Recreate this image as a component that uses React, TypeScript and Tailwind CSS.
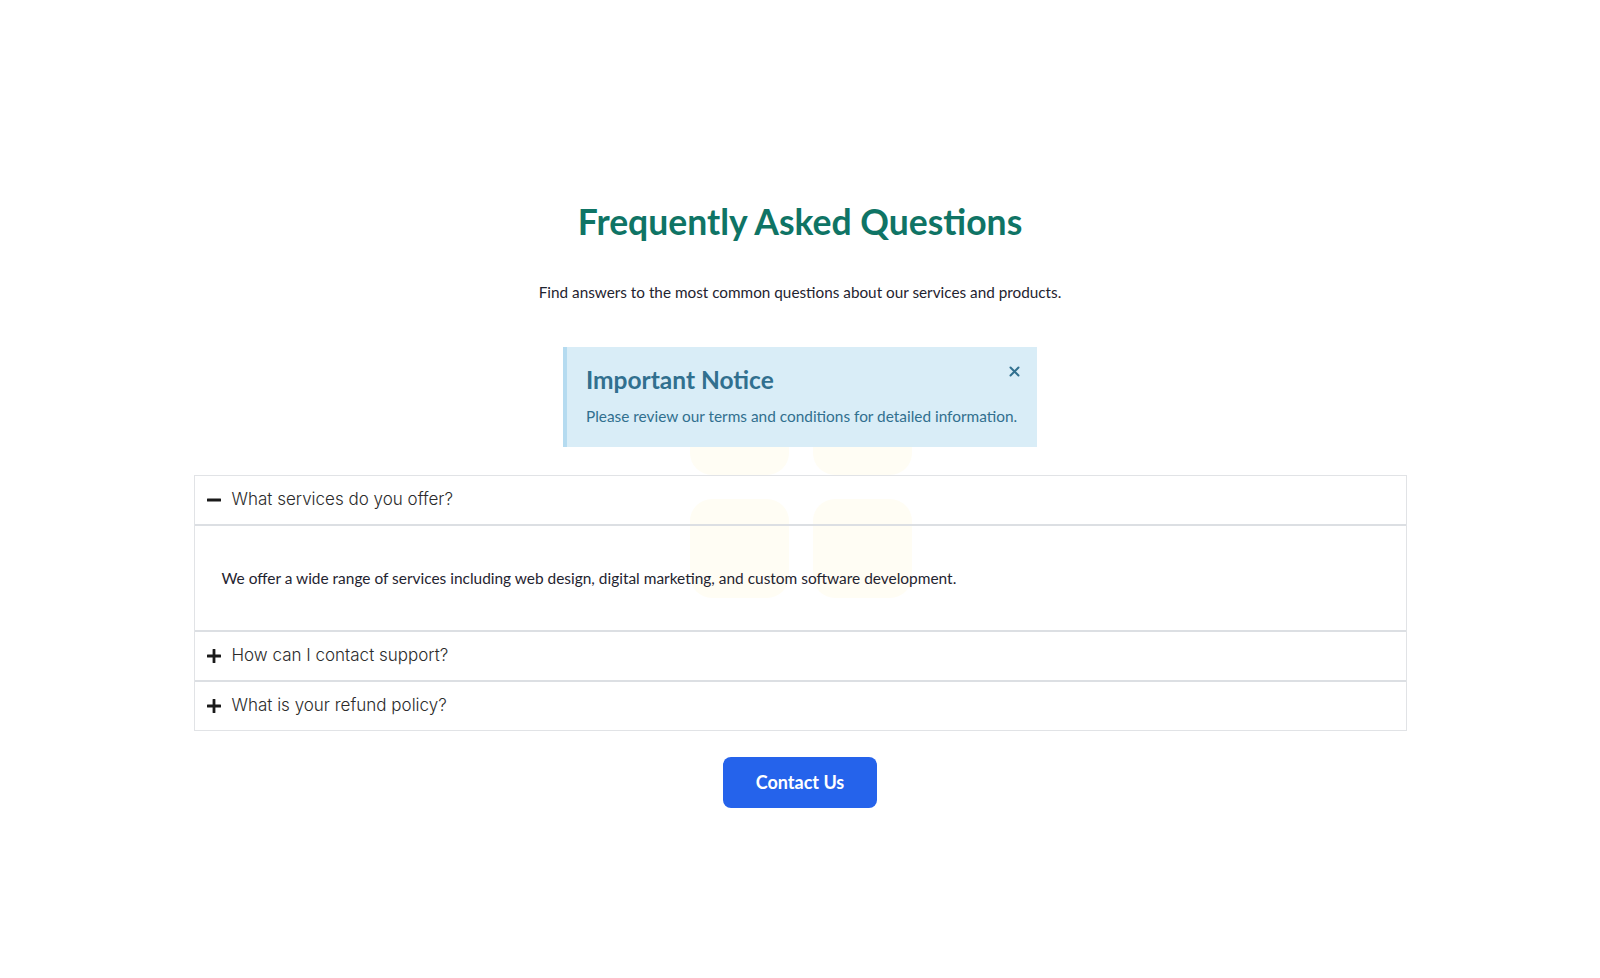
import React, { useState } from "react";

const faqs = [
  {
    q: "What services do you offer?",
    a: "We offer a wide range of services including web design, digital marketing, and custom software development.",
  },
  { q: "How can I contact support?", a: "You can contact support via email or phone." },
  { q: "What is your refund policy?", a: "We offer refunds within 30 days of purchase." },
];

function Minus() {
  return (
    <svg width="16" height="16" viewBox="0 0 16 16" className="shrink-0">
      <rect x="1" y="6.6" width="14" height="2.8" rx="0.5" fill="#1a1a1a" />
    </svg>
  );
}

function Plus() {
  return (
    <svg width="16" height="16" viewBox="0 0 16 16" className="shrink-0">
      <rect x="1" y="6.6" width="14" height="2.8" rx="0.5" fill="#1a1a1a" />
      <rect x="6.6" y="1" width="2.8" height="14" rx="0.5" fill="#1a1a1a" />
    </svg>
  );
}

export default function App() {
  const [open, setOpen] = useState(0);
  const [showNotice, setShowNotice] = useState(true);
  const display = "Lato, 'Open Sans', sans-serif";
  return (
    <div className="min-h-[978px] w-full bg-white" style={{ fontFamily: display }}>
      <div className="relative mx-auto flex w-[1213px] flex-col items-center pt-[202px]">
        {/* faint logo watermark */}
        <div className="pointer-events-none absolute left-[496px] top-[376px] grid grid-cols-2 gap-[24px]">
          <div className="h-[99px] w-[99px] rounded-[22px] bg-[#fffdf4]" />
          <div className="h-[99px] w-[99px] rounded-[22px] bg-[#fffdf4]" />
          <div className="h-[99px] w-[99px] rounded-[22px] bg-[#fffdf4]" />
          <div className="h-[99px] w-[99px] rounded-[22px] bg-[#fffdf4]" />
        </div>

        <h1 className="relative text-[35.5px] font-bold leading-[40px] text-[#0f7465]">
          Frequently Asked Questions
        </h1>
        <p className="relative mt-[38px] text-[15.3px] leading-[24px] text-[#1f2430]">
          Find answers to the most common questions about our services and products.
        </p>

        {showNotice && (
          <div className="relative mt-[43px] h-[100px] w-[474px] border-l-4 border-[#b5dbf0] bg-[#d9edf7] pl-[19px] pr-[16px] pt-[17px]">
            <h2 className="text-[24.5px] font-bold leading-[32px] text-[#31708f]">Important Notice</h2>
            <p className="mt-[8px] text-[15.4px] leading-[24px] text-[#31708f]">
              Please review our terms and conditions for detailed information.
            </p>
            <button
              onClick={() => setShowNotice(false)}
              className="absolute right-[17px] top-[18px] flex h-[12px] w-[12px] items-center justify-center"
            >
              <svg width="11" height="11" viewBox="0 0 11 11">
                <path d="M1.5 1.5 L9.5 9.5 M9.5 1.5 L1.5 9.5" stroke="#31708f" strokeWidth="2" strokeLinecap="round" />
              </svg>
            </button>
          </div>
        )}

        <div className="relative mt-[28px] w-full border border-[#e1e3e6]">
          {faqs.map((f, i) => (
            <div key={f.q} className={i > 0 ? "border-t-2 border-[#dcdfe3]" : ""}>
              <button
                onClick={() => setOpen(open === i ? -1 : i)}
                className="flex h-[48px] w-full items-center gap-[10px] px-[11px] text-left"
              >
                {open === i ? <Minus /> : <Plus />}
                <span
                  className="text-[17px] font-light text-[#2b2b2b]"
                  style={{ fontFamily: "Inter, 'Noto Sans', sans-serif" }}
                >
                  {f.q}
                </span>
              </button>
              {open === i && (
                <div className="border-t-2 border-[#dcdfe3] px-[27px] py-[40px] text-[15.45px] leading-[24px] text-[#1f2430]">
                  {f.a}
                </div>
              )}
            </div>
          ))}
        </div>

        <button className="relative mt-[26px] flex h-[51px] w-[154px] items-center justify-center rounded-[8px] bg-[#2563eb] text-[18px] font-bold text-white">
          Contact Us
        </button>
      </div>
    </div>
  );
}
